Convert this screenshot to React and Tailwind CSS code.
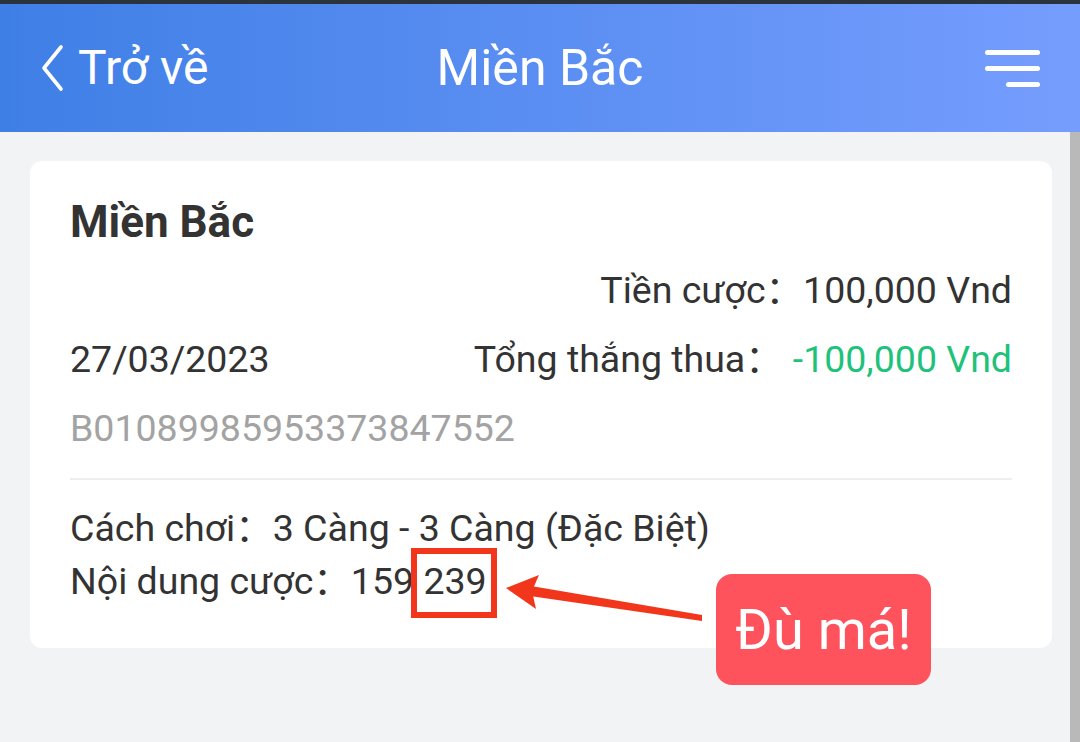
import React from 'react';

const FONT = "font-['Roboto','Noto_Sans_CJK_SC',sans-serif]";

function Header() {
  return (
    <header className="h-[128px] bg-linear-to-r from-[#3e7fe6] to-[#759dfe] grid grid-cols-[1fr_auto_1fr] items-center text-white">
      <div className="flex items-center pl-[40px]">
        <svg width="28" height="50" viewBox="0 0 28 50" className="mr-[10px]">
          <polyline points="21,4 4,25 21,46" fill="none" stroke="#fff" strokeWidth="3.6" strokeLinecap="round" strokeLinejoin="round" />
        </svg>
        <span className="text-[48px] leading-none">Trở về</span>
      </div>
      <h1 className="text-[50px] leading-none">Miền Bắc</h1>
      <div className="flex justify-end pr-[40px]">
        <div className="flex flex-col items-end gap-[11px] w-[55px]">
          <span className="h-[5px] w-full rounded-full bg-white" />
          <span className="h-[5px] w-full rounded-full bg-white" />
          <span className="h-[5px] w-[34px] rounded-full bg-white" />
        </div>
      </div>
    </header>
  );
}

function BetCard() {
  return (
    <div className="bg-white rounded-[12px] px-[40px] pt-[39px] pb-[40px] text-[37.5px] text-[#333]">
      <h2 className="text-[44px] leading-[44px] font-bold text-[#333]">Miền Bắc</h2>
      <div className="mt-[12px] leading-[69px]">
        <div className="text-right">Tiền cược：100,000 Vnd</div>
        <div className="flex justify-between">
          <span>27/03/2023</span>
          <span>
            Tổng thắng thua：<span className="ml-[10px] text-[#1fc27b]">-100,000 Vnd</span>
          </span>
        </div>
        <div className="text-[#a3a3a3]">B01089985953373847552</div>
      </div>
      <div className="mt-[15px] h-[2px] bg-[#eeeeee]" />
      <div className="mt-[22px] leading-[53px]">
        <div>Cách chơi：3 Càng - 3 Càng (Đặc Biệt)</div>
        <div>
          Nội dung cược：159{' '}
          <span className="relative inline-block">
            239
            <span className="absolute -left-[12px] -right-[10px] -top-[7px] -bottom-[10px] border-[6px] border-[#f1361b]" />
          </span>
        </div>
      </div>
    </div>
  );
}

export default function App() {
  return (
    <div className={`relative w-[1080px] h-[742px] overflow-hidden bg-[#f2f3f5] ${FONT}`}>
      <div className="h-[4px] bg-[#2b333d]" />
      <Header />
      <div className="flex">
        <main className="flex-1 pl-[30px] pr-[18px] pt-[29px]">
          <BetCard />
        </main>
        <div className="w-[10px] h-[610px] bg-[#b9b9b9]" />
      </div>

      {/* annotation arrow */}
      <svg className="absolute inset-0 pointer-events-none" width="1080" height="742" viewBox="0 0 1080 742">
        <polygon points="702,615 702,621 530,596 531,586" fill="#f1361b" />
        <polygon points="506,588 539,575 532,591 536,609" fill="#f1361b" />
      </svg>
      <div className="absolute left-[716px] top-[574px] w-[215px] h-[111px] rounded-[16px] bg-[#fe525c] flex items-center justify-center text-white text-[56px] leading-none">
        Đù má!
      </div>
    </div>
  );
}
